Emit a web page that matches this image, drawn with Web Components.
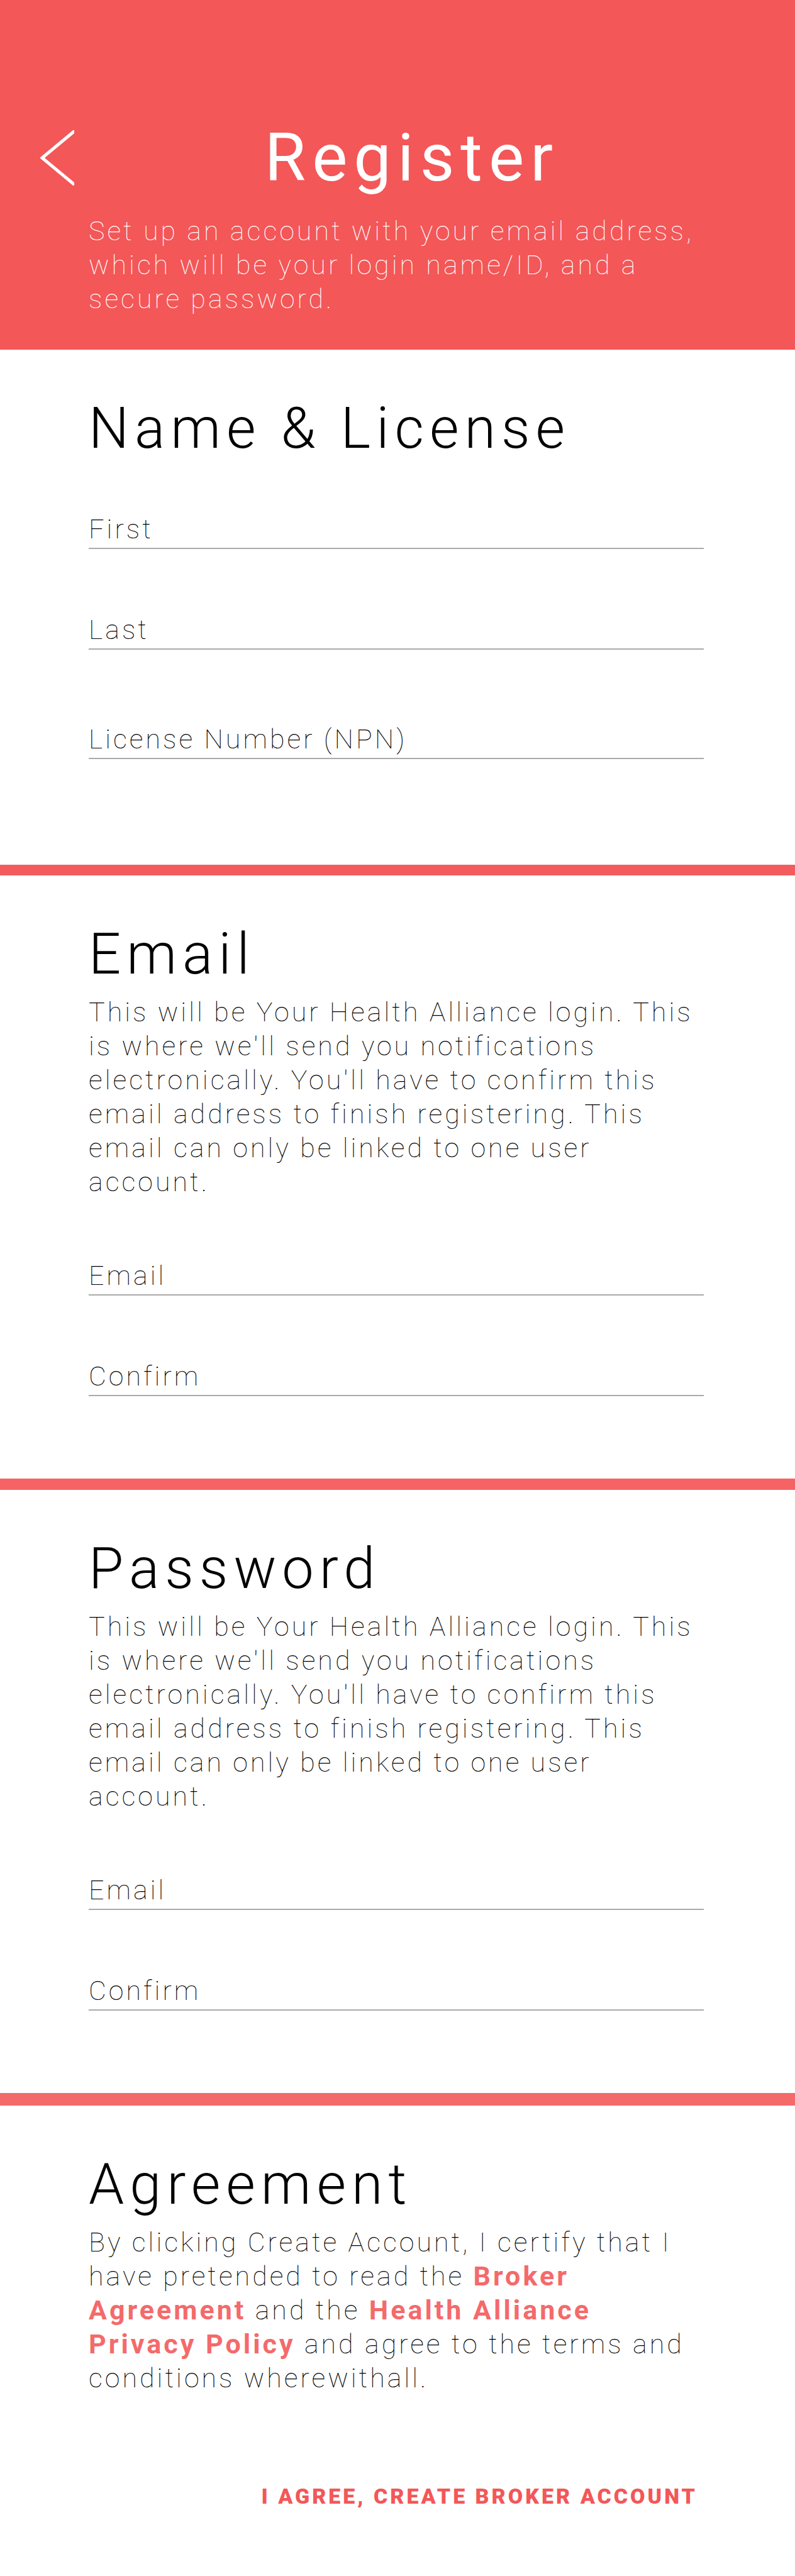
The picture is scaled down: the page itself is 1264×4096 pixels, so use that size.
<!DOCTYPE html>
<html lang="en">
<head>
<meta charset="utf-8">
<meta name="viewport" content="width=device-width, initial-scale=1">
<title>Register</title>
<style>
  body {
    margin: 0;
    background: #fff;
    color: #000;
    font: 150 43px/54px Roboto, "Liberation Sans", sans-serif;
    letter-spacing: 4px;
    --gutter-start: 141px;
    --gutter-end: 145px;
    --brand: #f35758;
    --link: #f46a6b;
  }
</style>
</head>
<body>
<register-page></register-page>

<template id="register-page">
  <style>
    :host { display: block; }
    form { display: block; margin: 0; }
    .agreement { --end: 107px; }
    .links-end { display: flex; justify-content: flex-end; padding-top: 141px; }
  </style>
  <page-header heading="Register">Set up an account with your email address, which will be your login name/ID, and a secure password.</page-header>
  <main>
    <form>
      <form-section heading="Name &amp; License" style="--end: 168px; --lead: 82px">
        <text-field label="First" name="first"></text-field>
        <text-field label="Last" name="last"></text-field>
        <text-field label="License Number (NPN)" name="npn" style="--extra: 14px"></text-field>
      </form-section>
      <form-section heading="Email" style="--bar: 17px; --bar-color: #f35c5e">
        <span slot="intro">This will be Your Health Alliance login. This is where we'll send you notifications electronically. You'll have to confirm this email address to finish registering. This email can only be linked to one user account.</span>
        <text-field label="Email" name="email" type="email"></text-field>
        <text-field label="Confirm" name="email-confirm" type="email"></text-field>
      </form-section>
      <form-section heading="Password" style="--bar: 18px; --bar-color: #f56364">
        <span slot="intro">This will be Your Health Alliance login. This is where we'll send you notifications electronically. You'll have to confirm this email address to finish registering. This email can only be linked to one user account.</span>
        <text-field label="Email" name="password" type="password"></text-field>
        <text-field label="Confirm" name="password-confirm" type="password"></text-field>
      </form-section>
      <form-section class="agreement" heading="Agreement" style="--bar: 20px; --bar-color: #f46a6b; --lead: 0px">
        <span slot="intro">By clicking Create Account, I certify that I have pretended to read the <text-link href="#broker">Broker Agreement</text-link> and the <text-link href="#privacy">Health Alliance Privacy Policy</text-link> and agree to the terms and conditions wherewithall.</span>
        <div class="links-end"><submit-button>I AGREE, CREATE BROKER ACCOUNT</submit-button></div>
      </form-section>
    </form>
  </main>
</template>

<template id="page-header">
  <style>
    :host { display: block; background: var(--brand); color: #fff; padding: 191px 0 54px; }
    .bar { display: flex; align-items: center; padding: 0 72px 0 64px; }
    button { flex: none; padding: 0; border: 0; background: none; color: inherit; cursor: pointer; }
    svg { display: block; width: 54px; height: 88px; }
    h1 { flex: 1; margin: 0; text-align: center; font-weight: 400; font-size: 106px; line-height: 120px; letter-spacing: 10px; }
    p { margin: 29px var(--gutter-end) 0 var(--gutter-start); }
  </style>
  <header>
    <div class="bar">
      <button type="button" aria-label="Back">
        <svg viewBox="0 0 54 88" fill="none" stroke="currentColor" stroke-width="5" aria-hidden="true"><path d="M56 0 3 44 56 88"/></svg>
      </button>
      <h1></h1>
    </div>
    <p><slot></slot></p>
  </header>
</template>

<template id="form-section">
  <style>
    :host { display: block; border-top: var(--bar, 0px) solid var(--bar-color, transparent); }
    section { padding: 76px var(--gutter-end) var(--end, 131px) var(--gutter-start); }
    h2 { margin: 0; font-weight: 300; font-size: 90px; line-height: 100px; letter-spacing: 9px; }
    p { margin: 14px 0 0; }
    p[hidden] { display: none; }
    .fields { display: flex; flex-direction: column; gap: 101px; padding-top: var(--lead, 95px); }
  </style>
  <section>
    <h2></h2>
    <p><slot name="intro"></slot></p>
    <div class="fields"><slot></slot></div>
  </section>
</template>

<template id="text-field">
  <style>
    :host { display: grid; padding-top: var(--extra, 0px); }
    label, input { grid-area: 1 / 1; }
    label { pointer-events: none; }
    input {
      box-sizing: border-box; width: 100%; height: 59px; margin: 0; padding: 0 0 3px;
      border: 0; border-bottom: 2px solid #aaa; border-radius: 0; outline: 0;
      background: none; color: inherit; font: inherit; letter-spacing: inherit;
    }
    input:focus { border-color: var(--brand); }
    :host([filled]) label { visibility: hidden; }
  </style>
  <label for="control"></label>
  <input id="control">
</template>

<template id="text-link">
  <style>
    :host { display: inline; }
    a { color: var(--link); font-weight: 700; text-decoration: none; }
  </style>
  <a><slot></slot></a>
</template>

<template id="submit-button">
  <style>
    :host { display: flex; }
    button {
      padding: 0 10px 0 0; border: 0; background: none; color: var(--brand); cursor: pointer;
      font: inherit; font-weight: 900; font-size: 34px; line-height: 40px; letter-spacing: inherit;
    }
  </style>
  <button type="submit"><slot></slot></button>
</template>

<script>
  class TemplateElement extends HTMLElement {
    constructor() {
      super();
      const template = document.getElementById(this.localName);
      this.attachShadow({ mode: "open" }).append(template.content.cloneNode(true));
    }
    find(selector) { return this.shadowRoot.querySelector(selector); }
  }

  class PageHeader extends TemplateElement {
    connectedCallback() {
      this.find("h1").textContent = this.getAttribute("heading");
      this.find("button").addEventListener("click", () => history.back());
    }
  }

  class FormSection extends TemplateElement {
    connectedCallback() {
      this.find("h2").textContent = this.getAttribute("heading");
      this.find("p").hidden = !this.querySelector("[slot=intro]");
    }
  }

  class TextField extends TemplateElement {
    connectedCallback() {
      const input = this.find("input");
      this.find("label").textContent = this.getAttribute("label");
      input.name = this.getAttribute("name");
      input.type = this.getAttribute("type") || "text";
      input.addEventListener("input", () => this.toggleAttribute("filled", input.value !== ""));
    }
  }

  class TextLink extends TemplateElement {
    connectedCallback() { this.find("a").href = this.getAttribute("href"); }
  }

  class SubmitButton extends TemplateElement {
    connectedCallback() {
      this.find("button").addEventListener("click", () => this.closest("form")?.requestSubmit());
    }
  }

  class RegisterPage extends TemplateElement {
    connectedCallback() {
      this.find("form").addEventListener("submit", (event) => event.preventDefault());
    }
  }

  customElements.define("page-header", PageHeader);
  customElements.define("form-section", FormSection);
  customElements.define("text-field", TextField);
  customElements.define("text-link", TextLink);
  customElements.define("submit-button", SubmitButton);
  customElements.define("register-page", RegisterPage);
</script>
</body>
</html>
